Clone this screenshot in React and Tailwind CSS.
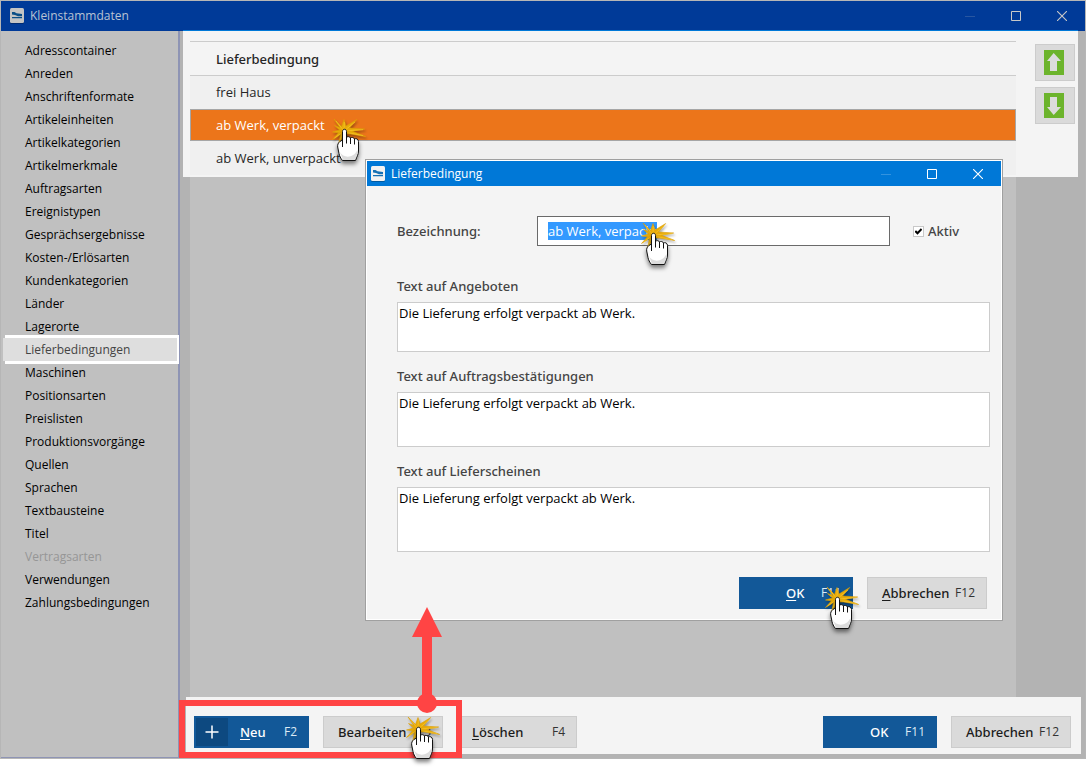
import { useEffect, useRef } from "react";

const categories = [
  "Adresscontainer",
  "Anreden",
  "Anschriftenformate",
  "Artikeleinheiten",
  "Artikelkategorien",
  "Artikelmerkmale",
  "Auftragsarten",
  "Ereignistypen",
  "Gesprächsergebnisse",
  "Kosten-/Erlösarten",
  "Kundenkategorien",
  "Länder",
  "Lagerorte",
  "Lieferbedingungen",
  "Maschinen",
  "Positionsarten",
  "Preislisten",
  "Produktionsvorgänge",
  "Quellen",
  "Sprachen",
  "Textbausteine",
  "Titel",
  "Vertragsarten",
  "Verwendungen",
  "Zahlungsbedingungen",
];

const texts = [
  { id: "angebote", label: "Text auf Angeboten", space: "mt-[30px]", height: "h-[50px]" },
  { id: "auftrag", label: "Text auf Auftragsbestätigungen", space: "mt-[14px]", height: "h-[55px]" },
  { id: "liefer", label: "Text auf Lieferscheinen", space: "mt-[14px]", height: "h-[65px]" },
];

const strong = "font-['Noto_Sans',sans-serif] font-medium";

function AppIcon({ body, mark }) {
  return (
    <svg width="14" height="16" viewBox="0 0 14 16" className="shrink-0" aria-hidden="true">
      <rect x="0" y="1" width="14" height="15" rx="1.5" fill="#000" opacity=".25" />
      <rect x="0" y="0" width="14" height="15" rx="1.5" className={body} />
      <path d="M2 4L4.500 4L6.500 5.200L12 6V8.300L8 8.200L5 7L2 6.500ZM2 9H12V10.200H2Z" className={mark} />
    </svg>
  );
}

function WindowControls({ className }) {
  return (
    <div className={"flex items-center " + className}>
      <button type="button" aria-label="Minimieren" className="flex h-6 w-[46px] items-center justify-center opacity-20">
        <svg width="10" height="10" viewBox="0 0 10 10" stroke="currentColor" fill="none"><path d="M0 5.5h10" /></svg>
      </button>
      <button type="button" aria-label="Maximieren" className="flex h-6 w-[46px] items-center justify-center">
        <svg width="10" height="10" viewBox="0 0 10 10" stroke="currentColor" fill="none"><path d="M.5.5h9v9h-9z" /></svg>
      </button>
      <button type="button" aria-label="Schließen" className="flex h-6 w-[46px] items-center justify-center">
        <svg width="10" height="10" viewBox="0 0 10 10" stroke="currentColor" strokeWidth="1.1" fill="none"><path d="M0 0l10 10M10 0L0 10" /></svg>
      </button>
    </div>
  );
}

function ArrowButton({ label, down }) {
  return (
    <button type="button" aria-label={label} className="flex h-[37px] w-10 items-center border border-[#cccccc] bg-[#dadada] pl-2">
      <svg width="20" height="25" viewBox="0 0 20 25">
        <rect width="20" height="25" fill="#6cb42c" />
        <path d={down ? "M6 4h7v10h4L9.700 22L3 14h3z" : "M6 21h7V11h4L9.700 3L3 11h3z"} fill="#dcdcdc" />
      </svg>
    </button>
  );
}

function PrimaryButton({ children, hotkey }) {
  return (
    <button type="button" className="flex h-8 w-[114px] items-center justify-between bg-[#125898] pr-3 pl-[47px] text-white">
      <span className={strong}>{children}</span>
      <span className="text-[12px] text-[#dcebf5]">{hotkey}</span>
    </button>
  );
}

function GreyButton({ children, hotkey }) {
  return (
    <button type="button" className="flex h-8 w-[120px] items-center justify-between border border-[#cccccc] bg-[#dadada] pr-[11px] pl-[14px] text-[#1c1c1c]">
      <span className={strong}>{children}</span>
      <span className="text-[12px] text-[#333333]">{hotkey}</span>
    </button>
  );
}

function ClickHand({ className }) {
  return (
    <svg width="38" height="54" viewBox="0 0 38 54" className={"pointer-events-none absolute " + className} aria-hidden="true">
      <path
        d="M3 3L10.500 10.500L13 3.500L15 10L25.700 3.500L18.500 12L33.700 13L21.500 15.300L34.700 20.500L19.500 18L14 18L7.700 27.500L9.500 18.500L1.500 23.500L7.500 16.800L1.500 16L8.500 14L3.500 9.500L9 11.500Z"
        fill="#e9ab08" stroke="#dc9f06" strokeWidth=".6"
        className="drop-shadow-[1px_2px_1px_rgba(0,0,0,0.35)]"
      />
      <path d="M5 5l8 10L13.300 6M13 15L24 6M13 15l19-1.300M13 16l19 3.500M12 16L3.500 22M12 16L9 24" stroke="#f7c52c" strokeWidth=".7" fill="none" />
      <g className="drop-shadow-[0px_3px_2px_rgba(0,0,0,0.5)]">
        <path
          d="M11.500 15.500C11.500 12.500 15.500 12.500 15.500 15.500V21.500C16.500 20.200 19 20.400 19.500 22C20.500 21 23 21.300 23.500 23C24.700 22.200 27.500 22.700 27.500 25.500V35C27.500 38.500 26 40 24.500 44.500H11.500C9.500 42 8.500 40 8 37.500L6.700 31C6.300 28.500 7.300 27 8.800 25.600L11.500 24Z"
          fill="#fff" stroke="#111" strokeWidth="1"
        />
        <path d="M9 36C12 42 22 43 26.500 34C27 39 25 41 24 44H12Z" fill="#cfcfcf" opacity=".7" />
        <path d="M11.500 23v8M15.500 21v6.500M19.500 22v6M23.500 23v5.500" stroke="#111" strokeWidth="1" fill="none" />
      </g>
    </svg>
  );
}

function Dialog() {
  const nameRef = useRef(null);
  useEffect(() => {
    nameRef.current.focus();
    nameRef.current.select();
  }, []);
  return (
    <div role="dialog" aria-label="Lieferbedingung" className="absolute top-[159px] right-[83px] left-[365px] border border-[#a0a0a0] bg-[#f4f4f4]">
      <div className="border border-white">
        <header className="flex h-[25px] items-center gap-[6px] bg-[#0078d7] pl-1 text-[12px] text-white">
          <AppIcon body="fill-[#f2f2f2]" mark="fill-[#1670b4]" />
          <span className="flex-1">Lieferbedingung</span>
          <WindowControls className="" />
        </header>
        <div className="pt-[30px] pr-[11px] pb-[10px] pl-[30px] text-[13px] leading-5 text-[#444444]">
          <div className="flex h-[30px] items-center">
            <label htmlFor="bezeichnung" className={"w-[140px] " + strong}>Bezeichnung:</label>
            <input
              id="bezeichnung"
              ref={nameRef}
              defaultValue="ab Werk, verpackt"
              className="h-[30px] min-w-0 flex-1 border border-[#6a6a6a] bg-white px-[10px] text-[#222222] outline-none selection:bg-[#3399ff] selection:text-white"
            />
            <label className={"ml-[23px] flex w-[77px] items-center gap-1 " + strong}>
              <span className="grid size-[11px] place-items-center">
                <input type="checkbox" defaultChecked className="peer col-start-1 row-start-1 size-[11px] appearance-none border border-[#c8c8c8] bg-white" />
                <svg width="7" height="7" viewBox="0 0 7 7" className="pointer-events-none col-start-1 row-start-1 hidden peer-checked:block" fill="none" stroke="#000" strokeWidth="2">
                  <path d="M.3 3L2.500 5.300L6.600 1" />
                </svg>
              </span>
              Aktiv
            </label>
          </div>
          {texts.map((t) => (
            <div key={t.id} className={t.space}>
              <label htmlFor={t.id} className={"block h-[26px] " + strong}>{t.label}</label>
              <textarea
                id={t.id}
                defaultValue="Die Lieferung erfolgt verpackt ab Werk."
                className={"block w-full resize-none border border-[#cccccc] bg-white p-px text-[13px] leading-[18px] text-black outline-none " + t.height}
              />
            </div>
          ))}
          <div className="mt-[25px] flex justify-end gap-[14px] pr-[3px]">
            <PrimaryButton hotkey="F11"><u className="underline-offset-2">O</u>K</PrimaryButton>
            <GreyButton hotkey="F12"><u className="underline-offset-2">A</u>bbrechen</GreyButton>
          </div>
        </div>
      </div>
    </div>
  );
}

export default function App() {
  return (
    <div className="relative flex min-h-screen flex-col bg-white pb-2 font-['Open_Sans','Segoe_UI',sans-serif] text-[13px] leading-5">
      <div className="flex flex-1 flex-col border border-[#b6b6b6]">
        <header className="flex h-[30px] items-center gap-[6px] bg-[#003a98] pl-[9px] text-[12px] text-[#b9c3d3]">
          <AppIcon body="fill-[#c4c4c4]" mark="fill-[#0a4e86]" />
          <span className="flex-1">Kleinstammdaten</span>
          <WindowControls className="text-[#c8c8c8]" />
        </header>
        <div className="flex flex-1 bg-[#b3b3b3]">
          <nav className="w-[179px] shrink-0 border-r-2 border-b border-[#8e94b4] bg-[#c0c0c0] pt-2">
            <ul>
              {categories.map((name) => (
                <li key={name} className="h-[23px]">
                  <button
                    type="button"
                    disabled={name === "Vertragsarten"}
                    className={
                      name === "Lieferbedingungen"
                        ? "ml-[2px] block h-[23px] w-[174px] bg-[#dedede] pl-[22px] text-left text-[12px] text-[#444444] shadow-[2px_3px_0_#fff,2px_-3px_0_#fff]"
                        : "block h-[23px] w-full pl-[24px] text-left text-[12px] text-black disabled:text-[#969696]"
                    }
                  >
                    {name}
                  </button>
                </li>
              ))}
            </ul>
          </nav>
          <main className="flex min-w-0 flex-1 flex-col">
            <section className="-mt-px mr-[7px] ml-[3px] flex items-start justify-between border-t border-[#0078d7] bg-[#f4f4f4] pr-[3px] pb-[2px] pl-[7px]">
              <table className="mt-[10px] mr-[19px] flex-1 border-separate border-spacing-0 text-left text-[#262626]">
                <thead>
                  <tr>
                    <th className={"h-[35px] w-[900px] border-y border-[#cccccc] py-0 pl-[26px] " + strong}>Lieferbedingung</th>
                  </tr>
                </thead>
                <tbody>
                  <tr className="bg-[#f0f0f0]"><td className="h-[33px] pt-0 pb-px pl-[26px]">frei Haus</td></tr>
                  <tr className="bg-[#ec751a] text-white"><td className="h-8 border border-[#a6a6a6] py-0 pl-[25px]">ab Werk, verpackt</td></tr>
                  <tr className="bg-[#f0f0f0]"><td className="h-[34px] py-0 pl-[26px]">ab Werk, unverpackt</td></tr>
                </tbody>
              </table>
              <div className="mt-[13px] flex shrink-0 flex-col gap-[6px]">
                <ArrowButton label="Nach oben" />
                <ArrowButton label="Nach unten" down />
              </div>
            </section>
            <div className="mr-[69px] ml-[10px] flex-1 bg-[#c0c0c0]" />
            <footer className="mr-1 mb-1 ml-[6px] flex h-[57px] items-center gap-[14px] bg-[#f4f4f4] pt-[19px] pr-[10px] pb-[6px] pl-2">
              <button type="button" className="flex h-8 w-[115px] items-center bg-[#125898] p-[2px] pr-3 text-white">
                <span className="flex h-full w-8 items-center justify-center bg-[#0d4980]">
                  <svg width="14" height="14" viewBox="0 0 14 14" stroke="#fff" strokeWidth="1.500"><path d="M7 .5v13M.5 7h13" /></svg>
                </span>
                <span className={"ml-3 flex-1 text-left " + strong}><u className="underline-offset-2">N</u>eu</span>
                <span className="text-[12px] text-[#dcebf5]">F2</span>
              </button>
              <GreyButton hotkey="F3">Bearbeiten</GreyButton>
              <GreyButton hotkey="F4"><u className="underline-offset-2">L</u>öschen</GreyButton>
              <div className="flex-1" />
              <PrimaryButton hotkey="F11">OK</PrimaryButton>
              <GreyButton hotkey="F12">Abbrechen</GreyButton>
            </footer>
          </main>
        </div>
      </div>

      <Dialog />

      <div className="pointer-events-none absolute bottom-[9px] left-[179px] h-[58px] w-[283px] border-6 border-[#ff4444]" />
      <svg width="30" height="106" viewBox="0 0 30 106" className="pointer-events-none absolute bottom-[54px] left-[412px]" fill="#ff4444" aria-hidden="true">
        <path d="M15 0L30 30H20V90H10V30H0Z" />
        <circle cx="15" cy="96" r="10" />
      </svg>
      <ClickHand className="top-[116px] left-[331px]" />
      <ClickHand className="top-[220px] left-[640px]" />
      <ClickHand className="top-[584px] right-[224px]" />
      <ClickHand className="bottom-[-1px] left-[405px]" />
    </div>
  );
}
